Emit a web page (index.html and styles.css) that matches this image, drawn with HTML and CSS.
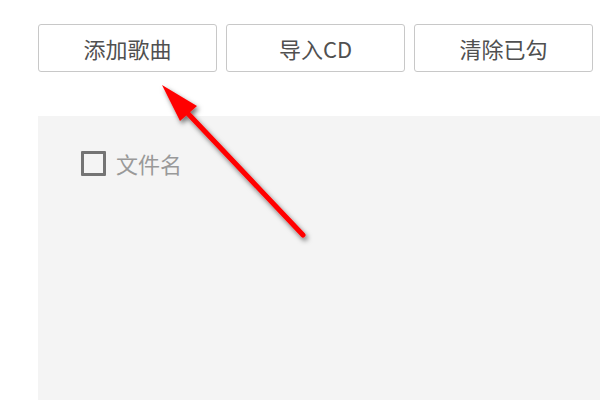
FILE: index.html
```html
<!DOCTYPE html>
<html lang="zh-CN">
<head>
<meta charset="utf-8">
<link rel="stylesheet" href="styles.css">
</head>
<body>
<div class="page">
  <div class="toolbar">
    <button class="btn">添加歌曲</button>
    <button class="btn">导入CD</button>
    <button class="btn">清除已勾</button>
  </div>
  <div class="panel">
    <label class="head">
      <span class="box"></span>
      <span class="label">文件名</span>
    </label>
  </div>
  <svg class="arrow" width="600" height="400" viewBox="0 0 600 400">
    <defs>
      <filter id="sh" x="-20%" y="-20%" width="140%" height="140%">
        <feDropShadow dx="2" dy="3" stdDeviation="2.5" flood-color="#000" flood-opacity="0.55"/>
      </filter>
    </defs>
    <g filter="url(#sh)">
      <line x1="303" y1="235" x2="178" y2="103" stroke="#ff0000" stroke-width="5" stroke-linecap="round"/>
      <polygon points="162,85 197,106 180,121" fill="#ff0000"/>
    </g>
  </svg>
</div>
</body>
</html>
```

FILE: styles.css
```css
html, body {
  margin: 0;
  padding: 0;
  background: #fff;
}
.page {
  position: relative;
  width: 600px;
  height: 400px;
  overflow: hidden;
  display: flex;
  flex-direction: column;
  font-family: "Noto Sans CJK SC", "Noto Sans", sans-serif;
}
.toolbar {
  display: flex;
  gap: 9px;
  padding: 24px 0 0 38px;
}
.btn {
  box-sizing: border-box;
  width: 179px;
  height: 48px;
  border: 1px solid #c8c8c8;
  border-radius: 3px;
  background: #fff;
  font-family: inherit;
  font-size: 22px;
  color: #505050;
  padding: 0;
}
.panel {
  flex: 1;
  margin: 44px 0 0 38px;
  background: #f4f4f4;
  padding: 35px 0 0 43px;
}
.head {
  display: flex;
  align-items: center;
  gap: 10px;
}
.box {
  box-sizing: border-box;
  width: 25px;
  height: 25px;
  border: 3px solid #747474;
  border-radius: 1px;
}
.label {
  font-size: 22px;
  color: #999;
  line-height: 25px;
}
.arrow {
  position: absolute;
  left: 0;
  top: 0;
}
```
